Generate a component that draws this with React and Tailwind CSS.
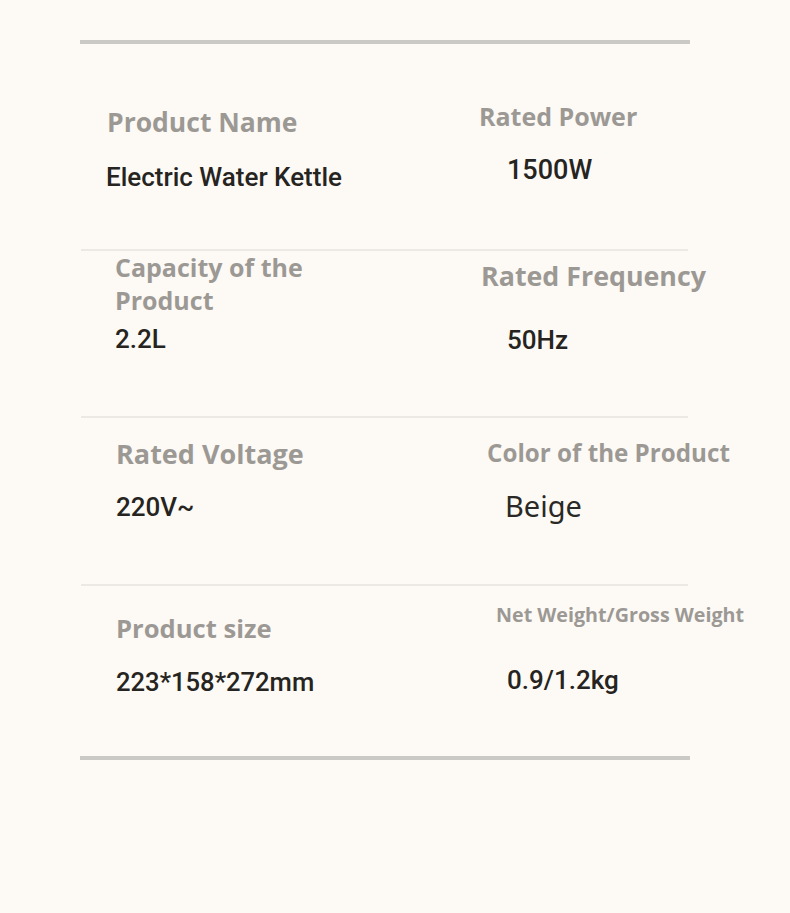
const labelBase = "font-['Open_Sans',sans-serif] font-bold text-[#9c9995] whitespace-nowrap";
const label = `${labelBase} leading-none`;
const value = "font-['Roboto',sans-serif] font-medium text-[#262421] leading-none whitespace-nowrap";

function Divider() {
  return <div className="ml-[81px] w-[607px] h-[2px] bg-[#ece9e4]" />;
}

export default function App() {
  return (
    <div className="w-[790px] h-[913px] bg-[#fdfaf5] pt-[40px]">
      {/* top rule */}
      <div className="ml-[80px] w-[610px] h-[4px] bg-[#cbc9c6]" />

      {/* row 1 */}
      <div className="grid grid-cols-[480px_1fr] h-[205px]">
        <div className="pl-[107px] pt-[65px]">
          <div className={`${label} text-[26.5px]`}>Product Name</div>
          <div className={`${value} font-bold text-[26px] mt-[28px] -ml-[1px]`}>Electric Water Kettle</div>
        </div>
        <div className="pt-[60px]">
          <div className={`${label} text-[25px] -ml-[1px]`}>Rated Power</div>
          <div className={`${value} text-[27px] mt-[28px] ml-[27px]`}>1500W</div>
        </div>
      </div>
      <Divider />

      {/* row 2 */}
      <div className="grid grid-cols-[480px_1fr] h-[165px]">
        <div className="pl-[115px]">
          <div className={`${labelBase} text-[25px] leading-[33px]`}>
            Capacity of the
            <br />
            Product
          </div>
          <div className={`${value} text-[26px] mt-[9px]`}>2.2L</div>
        </div>
        <div className="pt-[12px]">
          <div className={`${label} text-[26.8px] ml-[1px]`}>Rated Frequency</div>
          <div className={`${value} text-[26px] mt-[37px] ml-[27px]`}>50Hz</div>
        </div>
      </div>
      <Divider />

      {/* row 3 */}
      <div className="grid grid-cols-[480px_1fr] h-[166px]">
        <div className="pl-[116px] pt-[22px]">
          <div className={`${label} text-[27px]`}>Rated Voltage</div>
          <div className={`${value} text-[26px] mt-[27px]`}>220V~</div>
        </div>
        <div className="pt-[23px]">
          <div className={`${label} text-[24.2px] ml-[7px]`}>Color of the Product</div>
          <div className="font-['Noto_Sans',sans-serif] text-[29px] leading-none text-[#2b2926] mt-[26px] ml-[25px]">
            Beige
          </div>
        </div>
      </div>
      <Divider />

      {/* row 4 */}
      <div className="grid grid-cols-[480px_1fr] h-[170px]">
        <div className="pl-[116px] pt-[30px]">
          <div className={`${label} text-[25.6px]`}>Product size</div>
          <div className={`${value} text-[25.6px] mt-[28px]`}>223*158*272mm</div>
        </div>
        <div className="pt-[19px]">
          <div className={`${label} text-[19.7px] ml-[16px]`}>Net Weight/Gross Weight</div>
          <div className={`${value} text-[26px] mt-[42px] ml-[27px]`}>0.9/1.2kg</div>
        </div>
      </div>

      {/* bottom rule */}
      <div className="ml-[80px] w-[610px] h-[4px] bg-[#cbc9c6]" />
    </div>
  );
}
